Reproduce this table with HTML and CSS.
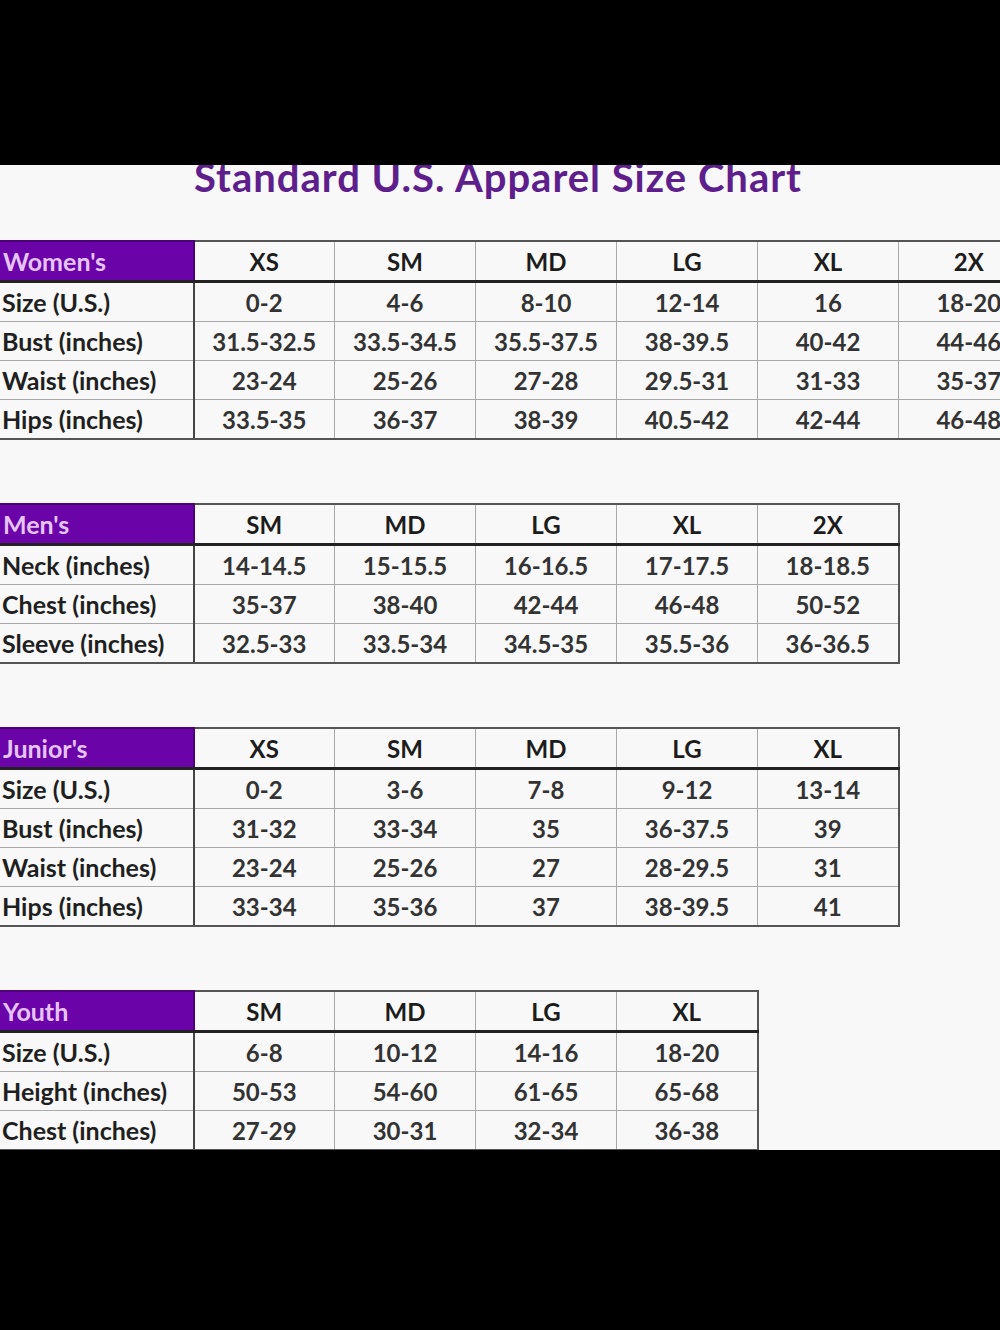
FILE: index.html
```html
<!DOCTYPE html>
<html lang="en">
<head>
<meta charset="utf-8">
<title>Standard U.S. Apparel Size Chart</title>
<link rel="stylesheet" href="styles.css">
</head>
<body>
<div class="band band-top"></div>
<main class="sheet">
  <h1 class="title">Standard U.S. Apparel Size Chart</h1>

  <table class="chart cols-6">
    <colgroup><col class="c-label"><col class="c-size"><col class="c-size"><col class="c-size"><col class="c-size"><col class="c-size"><col class="c-size"></colgroup>
    <thead><tr><th class="cat">Women's</th><th>XS</th><th>SM</th><th>MD</th><th>LG</th><th>XL</th><th>2X</th></tr></thead>
    <tbody>
      <tr><th>Size (U.S.)</th><td>0-2</td><td>4-6</td><td>8-10</td><td>12-14</td><td>16</td><td>18-20</td></tr>
      <tr><th>Bust (inches)</th><td>31.5-32.5</td><td>33.5-34.5</td><td>35.5-37.5</td><td>38-39.5</td><td>40-42</td><td>44-46</td></tr>
      <tr><th>Waist (inches)</th><td>23-24</td><td>25-26</td><td>27-28</td><td>29.5-31</td><td>31-33</td><td>35-37</td></tr>
      <tr><th>Hips (inches)</th><td>33.5-35</td><td>36-37</td><td>38-39</td><td>40.5-42</td><td>42-44</td><td>46-48</td></tr>
    </tbody>
  </table>

  <table class="chart cols-5">
    <colgroup><col class="c-label"><col class="c-size"><col class="c-size"><col class="c-size"><col class="c-size"><col class="c-size"></colgroup>
    <thead><tr><th class="cat">Men's</th><th>SM</th><th>MD</th><th>LG</th><th>XL</th><th>2X</th></tr></thead>
    <tbody>
      <tr><th>Neck (inches)</th><td>14-14.5</td><td>15-15.5</td><td>16-16.5</td><td>17-17.5</td><td>18-18.5</td></tr>
      <tr><th>Chest (inches)</th><td>35-37</td><td>38-40</td><td>42-44</td><td>46-48</td><td>50-52</td></tr>
      <tr><th>Sleeve (inches)</th><td>32.5-33</td><td>33.5-34</td><td>34.5-35</td><td>35.5-36</td><td>36-36.5</td></tr>
    </tbody>
  </table>

  <table class="chart cols-5">
    <colgroup><col class="c-label"><col class="c-size"><col class="c-size"><col class="c-size"><col class="c-size"><col class="c-size"></colgroup>
    <thead><tr><th class="cat">Junior's</th><th>XS</th><th>SM</th><th>MD</th><th>LG</th><th>XL</th></tr></thead>
    <tbody>
      <tr><th>Size (U.S.)</th><td>0-2</td><td>3-6</td><td>7-8</td><td>9-12</td><td>13-14</td></tr>
      <tr><th>Bust (inches)</th><td>31-32</td><td>33-34</td><td>35</td><td>36-37.5</td><td>39</td></tr>
      <tr><th>Waist (inches)</th><td>23-24</td><td>25-26</td><td>27</td><td>28-29.5</td><td>31</td></tr>
      <tr><th>Hips (inches)</th><td>33-34</td><td>35-36</td><td>37</td><td>38-39.5</td><td>41</td></tr>
    </tbody>
  </table>

  <table class="chart cols-4">
    <colgroup><col class="c-label"><col class="c-size"><col class="c-size"><col class="c-size"><col class="c-size"></colgroup>
    <thead><tr><th class="cat">Youth</th><th>SM</th><th>MD</th><th>LG</th><th>XL</th></tr></thead>
    <tbody>
      <tr><th>Size (U.S.)</th><td>6-8</td><td>10-12</td><td>14-16</td><td>18-20</td></tr>
      <tr><th>Height (inches)</th><td>50-53</td><td>54-60</td><td>61-65</td><td>65-68</td></tr>
      <tr><th>Chest (inches)</th><td>27-29</td><td>30-31</td><td>32-34</td><td>36-38</td></tr>
    </tbody>
  </table>
</main>
<div class="band band-bottom"></div>
</body>
</html>
```
FILE: styles.css
```css
html, body {
  margin: 0;
  padding: 0;
  background: #000;
}
body {
  width: 1000px;
  height: 1330px;
  overflow: hidden;
  font-family: Lato, "Open Sans", sans-serif;
}
.band-top { height: 165px; background: #000; }
.band-bottom { height: 180px; background: #000; }
.sheet {
  height: 985px;
  background: #f8f8f8;
  overflow: hidden;
  display: flex;
  flex-direction: column;
  align-items: flex-start;
}
.title {
  margin: -10px 0 0 0;
  height: 85px;
  flex: none;
  align-self: stretch;
  text-align: center;
  padding-right: 4px;
  font-size: 40px;
  line-height: 44px;
  letter-spacing: 1px;
  font-weight: 700;
  color: #5e1f8c;
}
.chart {
  border-collapse: collapse;
  table-layout: fixed;
  flex: none;
  margin-bottom: 63px;
  margin-left: -1px;
  font-weight: 700;
  color: #2a2a2a;
}
.cols-6 { width: 1040px; }
.cols-5 { width: 899px; }
.cols-4 { width: 758px; }
.chart:last-child { margin-bottom: 0; }
.c-label { width: 194px; }
.c-size { width: 141px; }
.chart th, .chart td {
  border: 1px solid #a9a9a9;
  padding: 0;
  height: 38px;
  white-space: nowrap;
  overflow: hidden;
}
.chart thead th {
  height: 38px;
  border-top: 2px solid #555;
  border-bottom: 3px solid #222;
  text-align: center;
  color: #1c1c1c;
  font-size: 24px;
}
.chart thead th.cat {
  background: #6a03a8;
  color: #e6c4f5;
  text-align: left;
  padding-left: 3px;
  font-size: 25px;
  border-color: #4b0278;
  border-bottom-color: #222;
}
.chart tbody th {
  text-align: left;
  padding-left: 2px;
  font-size: 25px;
  font-weight: 700;
  color: #1f1f1f;
}
.chart tbody td {
  text-align: center;
  font-size: 24px;
  color: #333;
}
.chart tbody tr:last-child th, .chart tbody tr:last-child td {
  border-bottom: 2px solid #555;
}
.chart tr > :last-child { border-right: 2px solid #555; }
.chart tr > :first-child { border-right: 2px solid #444; }
```
